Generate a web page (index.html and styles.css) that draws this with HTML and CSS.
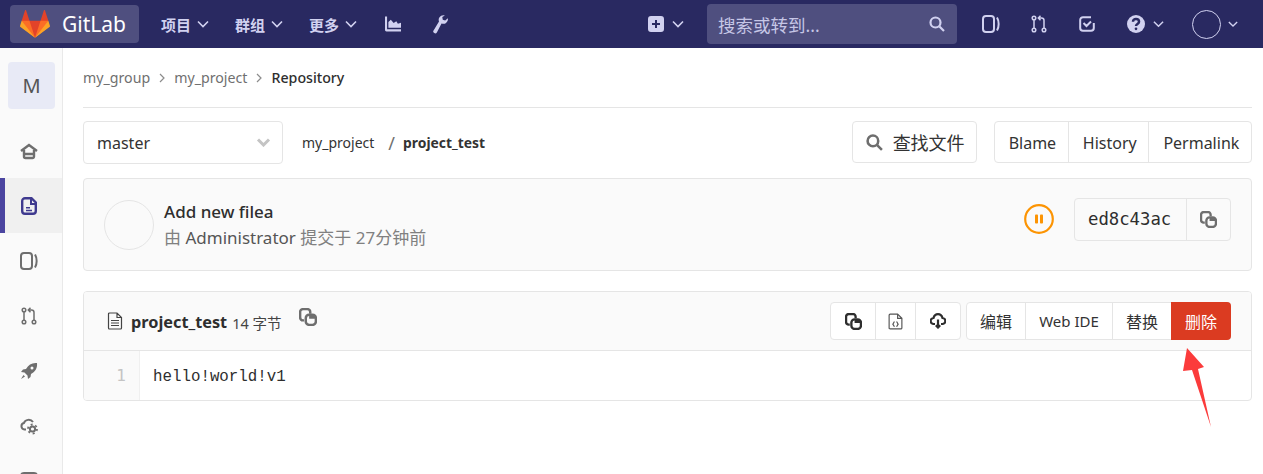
FILE: index.html
```html
<!DOCTYPE html>
<html lang="zh">
<head>
<meta charset="utf-8">
<title>project_test · my_project</title>
<link rel="stylesheet" href="styles.css">
</head>
<body>
<header class="nav">
  <a class="brand">
    <svg class="tanuki" viewBox="0 0 36 36"><path fill="#e24329" d="M2 14l9.38 9v-9l-4-12.28c-.205-.632-1.176-.632-1.38 0z"/><path fill="#e24329" d="M34 14l-9.38 9v-9l4-12.28c.205-.632 1.176-.632 1.38 0z"/><path fill="#e24329" d="M18 34.38 3 14h30z"/><path fill="#fc6d26" d="M18 34.38 11.38 14H2l4 11z"/><path fill="#fc6d26" d="M18 34.38 24.62 14H34l-4 11z"/><path fill="#fca326" d="M2 14L.1 20.16c-.18.565 0 1.2.5 1.56l17.42 12.66z"/><path fill="#fca326" d="M34 14l1.9 6.16c.18.565 0 1.2-.5 1.56L18 34.38z"/></svg>
    <span class="brand-name">GitLab</span>
  </a>
  <a class="nav-menu m-first">项目<svg class="chev" viewBox="0 0 12 8"><path d="M1 1.500l5 5 5-5"/></svg></a>
  <a class="nav-menu m-second">群组<svg class="chev" viewBox="0 0 12 8"><path d="M1 1.500l5 5 5-5"/></svg></a>
  <a class="nav-menu m-second">更多<svg class="chev" viewBox="0 0 12 8"><path d="M1 1.500l5 5 5-5"/></svg></a>
  <svg class="i-activity" viewBox="0 0 17 16"><path class="fill" d="M0 0h2.200v13.600H17V16H1.500A1.500 1.500 0 0 1 0 14.500z"/><path class="fill" d="M3.600 12V6l2.600-2.500 3 3.500L12 5l1.700 2.700 3.300-1V12z"/></svg>
  <svg class="i-wrench" viewBox="0 0 16 20"><path class="fill" d="M11 0a5 5 0 0 0-4.600 6.800L.6 16.300a2 2 0 0 0 .7 2.800 2 2 0 0 0 2.800-.7l5-9.500A5.200 5.200 0 0 0 15.600 6a5 5 0 0 0 .2-2.700l-2.800 2.400-2.600-.9-.5-2.700L12.700.3A5 5 0 0 0 11 0z"/></svg>
  <span class="nav-spacer"></span>
  <svg class="i-plus" viewBox="0 0 16 16"><path class="fill" fill-rule="evenodd" d="M3 0h10a3 3 0 0 1 3 3v10a3 3 0 0 1-3 3H3a3 3 0 0 1-3-3V3a3 3 0 0 1 3-3zm4 4v3H4v2h3v3h2V9h3V7H9V4z"/></svg>
  <svg class="chev c-plus" viewBox="0 0 12 8"><path d="M1 1.500l5 5 5-5"/></svg>
  <div class="search">
    <span>搜索或转到...</span>
    <svg class="search-ic" viewBox="0 0 16 16"><circle cx="6.500" cy="6.500" r="5" /><path d="M10.500 10.500l4.500 4.500"/></svg>
  </div>
  <svg class="i-issues" viewBox="0 0 18 18"><rect x="1" y="1" width="11" height="16" rx="3" class="line"/><path class="line" d="M15 2.500c2.200 3.500 2.200 9.500 0 13"/></svg>
  <svg class="i-mr" viewBox="0 0 18 18"><circle cx="4" cy="3" r="1.800" class="line thin"/><circle cx="4" cy="15" r="1.800" class="line thin"/><circle cx="14" cy="15" r="1.800" class="line thin"/><path class="line thin" d="M4 5v8M14 13V5.500c0-1.500-1-2.500-2.500-2.500H8.500M10.500 .8 8.300 3l2.200 2.200"/></svg>
  <svg class="i-todo" viewBox="0 0 16 16"><path class="line" d="M14.800 7v5a2.800 2.800 0 0 1-2.800 2.800H4A2.800 2.800 0 0 1 1.200 12V4A2.800 2.800 0 0 1 4 1.200h8M4.500 7l3 3 4.500-4.500"/></svg>
  <svg class="i-help" viewBox="0 0 16 16"><circle class="fill" cx="8" cy="8" r="8"/><path class="q" d="M5.300 6c0-1.500 1.200-2.400 2.700-2.400s2.700.9 2.700 2.300c0 2-2.700 2-2.700 3.800"/><circle class="qd" cx="8" cy="12.300" r="1.200"/></svg>
  <svg class="chev c-help" viewBox="0 0 12 8"><path d="M1 1.500l5 5 5-5"/></svg>
  <span class="avatar-nav"></span>
  <svg class="chev c-user" viewBox="0 0 12 8"><path d="M1 1.500l5 5 5-5"/></svg>
</header>

<div class="shell">
  <aside class="side">
    <div class="proj-tile">M</div>
    <a class="side-item">
      <svg class="side-ic" viewBox="0 0 18 18"><path class="sline home" d="M1 9 9 3l8 6M4 8v6.500A1.500 1.500 0 0 0 5.500 16h7a1.500 1.500 0 0 0 1.500-1.500V8M4 12h10"/></svg>
    </a>
    <a class="side-item active">
      <svg class="side-ic" viewBox="0 0 16 18"><path class="aline" d="M4 1.200h6.500l4.300 4.300V14a2.800 2.800 0 0 1-2.800 2.800H4A2.800 2.800 0 0 1 1.200 14V4A2.800 2.800 0 0 1 4 1.200z"/><path class="afill" d="M9 1h2v5h4v2H9zM5 10h4v1.500H5zM5 12.800h6v1.500H5z"/></svg>
    </a>
    <a class="side-item">
      <svg class="side-ic" viewBox="0 0 18 18"><rect x="1" y="1" width="11" height="16" rx="3" class="sline"/><path class="sline" d="M15 2.500c2.200 3.500 2.200 9.500 0 13"/></svg>
    </a>
    <a class="side-item">
      <svg class="side-ic" viewBox="0 0 18 18"><circle cx="4" cy="3" r="1.800" class="sline thin"/><circle cx="4" cy="15" r="1.800" class="sline thin"/><circle cx="14" cy="15" r="1.800" class="sline thin"/><path class="sline thin" d="M4 5v8M14 13V5.500c0-1.500-1-2.500-2.500-2.500H8.500M10.500 .8 8.300 3l2.200 2.200"/></svg>
    </a>
    <a class="side-item">
      <svg class="side-ic" viewBox="0 0 18 18"><path class="sfill" fill-rule="evenodd" d="M17 1c-5-.5-8.500 1.500-11 6L3 7.500 1 10l3.500.5 3 3L8 17l2.500-2 .5-3c4.500-2.500 6.500-6 6-11zM12 4.500a1.500 1.500 0 1 1 0 3 1.500 1.500 0 0 1 0-3zM3.500 13 1 17l4-2.500z"/></svg>
    </a>
    <a class="side-item">
      <svg class="side-ic" viewBox="0 0 18 18"><path class="sline" d="M6 12.500H4.500A3.300 3.300 0 0 1 4 6C5 2.500 10.500 1.500 13 5"/><circle cx="12.500" cy="12" r="2.600" class="sline"/><circle cx="12.500" cy="12" r="4.500" class="sline dash"/></svg>
    </a>
    <a class="side-item">
      <svg class="side-ic" viewBox="0 0 18 18"><rect x="1" y="1" width="16" height="16" rx="3" class="sline"/></svg>
    </a>
  </aside>

  <main class="main">
    <nav class="crumbs">
      <a>my_group</a><svg class="crumb-sep" viewBox="0 0 6 10"><path d="M1 1l4 4-4 4"/></svg>
      <a>my_project</a><svg class="crumb-sep" viewBox="0 0 6 10"><path d="M1 1l4 4-4 4"/></svg>
      <strong>Repository</strong>
    </nav>

    <div class="tree-bar">
      <div class="branch">master<svg class="branch-chev" viewBox="0 0 14 9"><path d="M1.500 1.500 7 7l5.500-5.500"/></svg></div>
      <div class="path"><a>my_project</a><span class="slash">/</span><strong>project_test</strong></div>
      <span class="grow"></span>
      <a class="btn find"><svg class="find-ic" viewBox="0 0 16 16"><circle cx="6.500" cy="6.500" r="5"/><path d="M10.500 10.500l4.500 4.500"/></svg>查找文件</a>
      <div class="btn-group hist">
        <a class="seg">Blame</a><a class="seg">History</a><a class="seg">Permalink</a>
      </div>
    </div>

    <section class="commit">
      <span class="commit-avatar"></span>
      <div class="commit-text">
        <div class="commit-title">Add new filea</div>
        <div class="commit-meta">由 <span class="author">Administrator</span> 提交于 27分钟前</div>
      </div>
      <span class="grow"></span>
      <div class="commit-side">
        <svg class="status" viewBox="0 0 30 30"><circle cx="15" cy="15" r="13.800"/><rect x="11" y="10.500" width="3" height="9" rx=".8"/><rect x="16" y="10.500" width="3" height="9" rx=".8"/></svg>
        <div class="sha">
          <span class="sha-text">ed8c43ac</span>
          <span class="sha-copy"><svg class="copy" viewBox="0 0 16 16"><path d="M4.500 11H3.500A2.500 2.500 0 0 1 1 8.500v-5A2.500 2.500 0 0 1 3.500 1h4A2.500 2.500 0 0 1 10 3.500V5"/><rect x="6" y="6" width="9" height="9" rx="3"/><path class="copy-in" d="M9 6h3.500L15 8.500v1H9z"/></svg></span>
        </div>
      </div>
    </section>

    <section class="file">
      <header class="file-head">
        <svg class="file-ic" viewBox="0 0 16 18"><path d="M1.500 2A1 1 0 0 1 2.500 1H10l4.500 4.500V16a1 1 0 0 1-1 1h-11a1 1 0 0 1-1-1zM10 1v4.500h4.500M4 8.500h8M4 11h8M4 13.500h8"/></svg>
        <strong class="file-name">project_test</strong>
        <span class="file-size">14 字节</span>
        <svg class="copy head-copy" viewBox="0 0 16 16"><path d="M4.500 11H3.500A2.500 2.500 0 0 1 1 8.500v-5A2.500 2.500 0 0 1 3.500 1h4A2.500 2.500 0 0 1 10 3.500V5"/><rect x="6" y="6" width="9" height="9" rx="3"/><path class="copy-in" d="M9 6h3.500L15 8.500v1H9z"/></svg>
        <span class="grow"></span>
        <div class="btn-group icons">
          <a class="seg ic-copy"><svg class="copy dark" viewBox="0 0 16 16"><path d="M4.500 11H3.500A2.500 2.500 0 0 1 1 8.500v-5A2.500 2.500 0 0 1 3.500 1h4A2.500 2.500 0 0 1 10 3.500V5"/><rect x="6" y="6" width="9" height="9" rx="3"/><path class="copy-in" d="M9 6h3.500L15 8.500v1H9z"/></svg></a>
          <a class="seg ic-raw"><svg class="raw" viewBox="0 0 14 16"><path d="M1 2a1 1 0 0 1 1-1h7l4 4v9a1 1 0 0 1-1 1H2a1 1 0 0 1-1-1zM9 1v4h4M6 8l-1.500 2.500L6 13M8 8l1.500 2.500L8 13"/></svg></a>
          <a class="seg ic-dl"><svg class="dl" viewBox="0 0 16 16"><path d="M5 11H3.800A3 3 0 0 1 3.500 5C4.200 2.500 6 1.200 8 1.200S11.800 2.500 12.500 5a3 3 0 0 1-.3 6H11M8 6.500V14.500M5.800 12.200 8 14.500l2.200-2.300"/></svg></a>
        </div>
        <div class="btn-group actions">
          <a class="seg a-edit">编辑</a><a class="seg a-ide">Web IDE</a><a class="seg a-rep">替换</a><a class="seg danger">删除</a>
        </div>
      </header>
      <div class="code">
        <div class="gutter">1</div>
        <pre class="line-text">hello!world!v1</pre>
      </div>
    </section>
  </main>
</div>

<svg class="arrow" viewBox="0 0 40 82"><path d="M4 1 21 20 15 22 28 80 9 23 0 24z"/></svg>
</body>
</html>
```

FILE: styles.css
```css
* { box-sizing: border-box; }
html, body { margin: 0; height: 100%; overflow: hidden; }
body {
  position: relative;
  font-family: "Noto Sans", "Noto Sans CJK SC", sans-serif;
  font-size: 16px;
  color: #2e2e2e;
  background: #fff;
}
svg { display: block; flex: none; }

.nav {
  display: flex;
  align-items: center;
  height: 48px;
  padding-left: 10px;
  background: #292961;
  color: #d1d1f0;
}
.brand {
  display: flex;
  align-items: center;
  width: 129px;
  height: 38px;
  padding-left: 10px;
  border-radius: 4px;
  background: #4f4f7f;
}
.tanuki { width: 30px; height: 30px; }
.brand-name { margin-left: 12px; font-size: 21px; color: #fff; }
.nav-menu {
  display: flex;
  align-items: center;
  font-size: 15px;
  font-weight: 700;
  color: #d1d1f0;
}
.m-first { margin-left: 22px; }
.m-second { margin-left: 26px; }
.chev { width: 12px; height: 8px; margin-left: 6px; }
.chev path { fill: none; stroke: #d1d1f0; stroke-width: 1.600; }
.fill { fill: #d1d1f0; }
.line { fill: none; stroke: #d1d1f0; stroke-width: 2; }
.line.thin { stroke-width: 1.500; }
.q { fill: none; stroke: #292961; stroke-width: 2.200; }
.qd { fill: #292961; }
.i-activity { width: 16px; height: 16px; margin-left: 28px; }
.i-wrench { width: 15px; height: 19px; margin-left: 32px; }
.nav-spacer { flex: 1; }
.i-plus { width: 16px; height: 16px; }
.c-plus { margin-left: 8px; }
.search {
  display: flex;
  align-items: center;
  justify-content: space-between;
  width: 250px;
  height: 40px;
  margin-left: 23px;
  padding: 0 12px 0 11px;
  border-radius: 4px;
  background: #4f4f7f;
  font-size: 17.500px;
  color: #c6c6e6;
}
.search-ic { width: 16px; height: 16px; }
.search-ic circle, .search-ic path { fill: none; stroke: #d1d1f0; stroke-width: 2.200; }
.i-issues { width: 18px; height: 18px; margin-left: 25px; }
.i-mr { width: 18px; height: 18px; margin-left: 30px; }
.i-todo { width: 16px; height: 16px; margin-left: 31px; }
.i-help { width: 18px; height: 18px; margin-left: 32px; }
.c-help { width: 11px; margin-left: 8px; }
.avatar-nav {
  width: 29px;
  height: 29px;
  margin-left: 28px;
  border: 1px solid #d1d1f0;
  border-radius: 50%;
}
.c-user { width: 10px; margin: 0 25px 0 7px; }

.shell { display: flex; height: calc(100vh - 48px); }
.side {
  width: 63px;
  flex: none;
  padding-top: 14px;
  background: #fafafa;
  border-right: 1px solid #e9e9e9;
  overflow: hidden;
}
.proj-tile {
  display: flex;
  align-items: center;
  justify-content: center;
  width: 47px;
  height: 47px;
  margin-left: 8px;
  margin-bottom: 14px;
  border-radius: 4px;
  background: #e8eaf6;
  font-size: 20px;
  color: #555;
}
.side-item {
  display: flex;
  align-items: center;
  justify-content: center;
  height: 55px;
  padding-right: 4px;
}
.side-item.active {
  background: #f0f0f0;
  border-left: 5px solid #4b45a0;
  padding-right: 9px;
}
.side-ic { width: 18px; height: 18px; }
.sline { fill: none; stroke: #6e6e6e; stroke-width: 2; }
.sline.home { stroke-width: 2.400; }
.sline.thin { stroke-width: 1.500; }
.sline.dash { stroke-width: 1.800; stroke-dasharray: 2 2.700; }
.sfill { fill: #6e6e6e; }
.aline { fill: none; stroke: #3f3a8f; stroke-width: 2.400; }
.afill { fill: #3f3a8f; }

.main { flex: 1; min-width: 0; padding: 0 11px 0 20px; }
.crumbs {
  display: flex;
  align-items: center;
  height: 60px;
  border-bottom: 1px solid #e5e5e5;
  font-size: 14.200px;
  color: #707070;
}
.crumbs strong { font-weight: 500; color: #2e2e2e; }
.crumb-sep { width: 6px; height: 10px; margin: 0 9px; }
.crumb-sep path { fill: none; stroke: #8c8c8c; stroke-width: 1.200; }

.tree-bar { display: flex; align-items: flex-start; height: 43px; margin-top: 13px; }
.branch {
  display: flex;
  align-items: center;
  justify-content: space-between;
  width: 200px;
  height: 43px;
  padding: 0 11px 0 13px;
  border: 1px solid #e5e5e5;
  border-radius: 4px;
  color: #333;
}
.branch-chev { width: 15px; height: 9px; }
.branch-chev path { fill: none; stroke: #c4c4c4; stroke-width: 3; }
.path { display: flex; align-items: center; height: 43px; margin-left: 19px; font-size: 14px; color: #333; }
.slash { margin: 0 8px 0 14px; font-size: 18px; color: #707070; }
.path strong { font-weight: 700; font-size: 13.900px; }
.grow { flex: 1; }
.btn {
  display: flex;
  align-items: center;
  height: 42px;
  border: 1px solid #e5e5e5;
  border-radius: 4px;
}
.find { width: 125px; padding-left: 13px; font-size: 18px; white-space: nowrap; color: #333; }
.find-ic { width: 17px; height: 17px; margin-right: 10px; }
.find-ic circle, .find-ic path { fill: none; stroke: #6e6e6e; stroke-width: 2.400; }
.btn-group { display: flex; border: 1px solid #e5e5e5; border-radius: 4px; background: #fff; }
.seg { display: flex; align-items: center; justify-content: center; border-left: 1px solid #e5e5e5; color: #333; }
.seg:first-child { border-left: 0; }
.hist { height: 42px; margin-left: 17px; }
.hist .seg { padding: 1px 11.700px 0 14px; font-size: 16px; }

.commit {
  display: flex;
  align-items: center;
  height: 93px;
  margin-top: 14px;
  padding: 0 20px;
  border: 1px solid #e5e5e5;
  border-radius: 4px;
  background: #fafafa;
}
.commit-avatar { width: 50px; height: 50px; border: 1px solid #e5e5e5; border-radius: 50%; }
.commit-text { margin-left: 10px; }
.commit-title { font-size: 17px; font-weight: 500; line-height: 26px; color: #2e2e2e; }
.commit-meta { font-size: 17px; line-height: 26px; color: #808080; }
.author { color: #555; }
.commit-side { display: flex; align-items: center; margin-bottom: 11px; }
.status { width: 30px; height: 30px; margin-right: 20px; }
.status circle { fill: none; stroke: #fc9403; stroke-width: 2.200; }
.status rect { fill: #fc9403; }
.sha { display: flex; height: 43px; border: 1px solid #e5e5e5; border-radius: 4px; }
.sha-text {
  display: flex;
  align-items: center;
  width: 111px;
  padding-left: 13px;
  font-family: "DejaVu Sans Mono", monospace;
  font-size: 17.300px;
  color: #2e2e2e;
}
.sha-copy { display: flex; align-items: center; justify-content: center; width: 44px; border-left: 1px solid #e5e5e5; }
.copy { width: 17px; height: 17px; }
.copy path, .copy rect { fill: none; stroke: #6e6e6e; stroke-width: 2.200; }
.copy .copy-in { fill: #6e6e6e; stroke: none; }
.copy.dark path, .copy.dark rect { stroke: #2e2e2e; }
.copy.dark .copy-in { fill: #2e2e2e; stroke: none; }

.file { margin-top: 20px; border: 1px solid #e5e5e5; border-radius: 4px; overflow: hidden; }
.file-head {
  display: flex;
  align-items: center;
  height: 59px;
  padding: 0 20px 0 23px;
  border-bottom: 1px solid #e5e5e5;
  background: #fafafa;
}
.file-ic { width: 16px; height: 18px; }
.file-ic path { fill: none; stroke: #444; stroke-width: 1.200; }
.file-name { margin-left: 8px; padding-top: 2px; font-size: 16.300px; font-weight: 700; }
.file-size { margin-left: 5px; padding-top: 2px; font-size: 14.500px; color: #444; }
.head-copy { width: 18px; height: 18px; margin: -9px 0 0 17px; }
.icons { height: 38px; }
.ic-copy { width: 44px; }
.ic-raw { width: 40px; }
.ic-dl { width: 45px; }
.raw { width: 15px; height: 17px; }
.raw path { fill: none; stroke: #555; stroke-width: 1.100; }
.dl { width: 16px; height: 16px; }
.dl path { fill: none; stroke: #2e2e2e; stroke-width: 2.200; }
.actions { height: 38px; margin-left: 5px; }
.actions .seg { font-size: 16px; }
.a-edit { width: 58px; }
.actions .a-ide { width: 87px; font-size: 15px; }
.a-rep { width: 59px; }
.seg.danger { width: 60px; background: #db3b21; border: 0; color: #fff; border-radius: 0 4px 4px 0; margin: -1px -1px -1px 0; }

.code { display: flex; height: 49px; }
.gutter {
  width: 56px;
  padding: 15px 13px 0 0;
  text-align: right;
  background: #fafafa;
  border-right: 1px solid #f0f0f0;
  font-family: "DejaVu Sans Mono", monospace;
  font-size: 16px;
  color: #c4c4c4;
}
.line-text {
  margin: 0;
  padding: 17px 0 0 13px;
  font-family: "Liberation Mono", monospace;
  font-size: 15.800px;
  color: #2e2e2e;
}

.arrow {
  position: absolute;
  left: 1183px;
  top: 347px;
  width: 40px;
  height: 82px;
}
.arrow path { fill: #fb3b3b; }
```
